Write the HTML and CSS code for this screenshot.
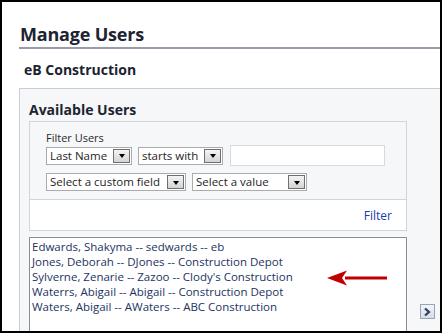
FILE: index.html
```html
<!DOCTYPE html>
<html>
<head>
<meta charset="utf-8">
<link rel="stylesheet" href="styles.css">
</head>
<body>
<div class="frame">
  <h1 class="title">Manage Users</h1>
  <h2 class="company">eB Construction</h2>
  <div class="panel">
    <h3 class="panel-title">Available Users</h3>
    <div class="filterbox">
      <div class="filter-top">
        <div class="filter-label">Filter Users</div>
        <div class="filter-row">
          <div class="select sel-last"><span class="sel-text">Last Name</span><span class="sel-btn"><span class="tri"></span></span></div>
          <div class="select sel-op"><span class="sel-text">starts with</span><span class="sel-btn"><span class="tri"></span></span></div>
          <div class="text-input"></div>
        </div>
        <div class="filter-row row2">
          <div class="select sel-field"><span class="sel-text">Select a custom field</span><span class="sel-btn"><span class="tri"></span></span></div>
          <div class="select sel-value"><span class="sel-text">Select a value</span><span class="sel-btn"><span class="tri"></span></span></div>
        </div>
      </div>
      <div class="filter-bottom"><a class="filter-link">Filter</a></div>
    </div>
    <div class="list-row">
      <div class="listbox">
        <div class="item">Edwards, Shakyma -- sedwards -- eb</div>
        <div class="item">Jones, Deborah -- DJones -- Construction Depot</div>
        <div class="item">Sylverne, Zenarie -- Zazoo -- Clody's Construction</div>
        <div class="item">Waterrs, Abigail -- Abigail -- Construction Depot</div>
        <div class="item">Waters, Abigail -- AWaters -- ABC Construction</div>
      </div>
      <div class="move-btn">
        <svg width="9" height="10" viewBox="0 0 9 10"><path d="M2 1.5 L6 5 L2 8.5" fill="none" stroke="#2f3f5c" stroke-width="2.2"/></svg>
      </div>
    </div>
    <svg class="arrow" width="62" height="18" viewBox="0 0 62 18"><path d="M18 7.5 H60 V10.5 H18 Z" fill="#c00000"/><path d="M0 9 L20 1.5 L15 9 L20 16.5 Z" fill="#c00000"/></svg>
  </div>
</div>
</body>
</html>
```

FILE: styles.css
```css
html, body {
  margin: 0;
  padding: 0;
  background: #ffffff;
}
.frame {
  width: 442px;
  height: 333px;
  box-sizing: border-box;
  border: 2px solid #000;
  padding-left: 17px;
  overflow: hidden;
  font-family: "Open Sans", "Noto Sans", sans-serif;
  color: #1c2433;
}
.title {
  margin: 21px 0 0 0;
  padding: 0 0 2px 1px;
  font-size: 18px;
  line-height: 22px;
  font-weight: 700;
  color: #1d2331;
  border-bottom: 2px solid #959cab;
  letter-spacing: -0.2px;
}
.company {
  margin: 12px 0 0 0;
  padding-left: 5px;
  font-size: 14px;
  line-height: 18px;
  font-weight: 700;
  color: #1d2331;
}
.panel {
  position: relative;
  margin-top: 9px;
  border-top: 1px solid #c9ced6;
  border-left: 1px solid #c9ced6;
  background: #f5f7f9;
  padding: 12px 0 0 9px;
  height: 300px;
}
.panel-title {
  margin: 0;
  font-size: 14px;
  line-height: 18px;
  font-weight: 700;
  color: #1d2331;
}
.filterbox {
  margin-top: 2px;
  width: 378px;
  box-sizing: border-box;
  border: 1px solid #d0d5dc;
}
.filter-top {
  padding: 9px 0 8px 16px;
  border-bottom: 1px solid #d0d5dc;
  background: #f5f7f9;
}
.filter-label {
  font-size: 11px;
  line-height: 14px;
  color: #2a2a2a;
}
.filter-row {
  display: flex;
  align-items: center;
  gap: 6px;
  height: 21px;
}
.row2 {
  margin-top: 7px;
  height: 18px;
}
.select {
  display: flex;
  align-items: center;
  justify-content: space-between;
  box-sizing: border-box;
  height: 18px;
  border: 1px solid #a9abb0;
  background: #fff;
  padding: 0 1px 0 3px;
  font-size: 11.5px;
  color: #1e1e1e;
}
.sel-text {
  white-space: nowrap;
  line-height: 16px;
}
.sel-last { width: 86px; }
.sel-op { width: 85px; }
.sel-field { width: 140px; }
.sel-value { width: 115px; }
.sel-btn {
  display: flex;
  align-items: center;
  justify-content: center;
  box-sizing: border-box;
  width: 17px;
  height: 14px;
  border: 1px solid #6f6f6f;
  background: linear-gradient(#f4f4f4, #d4d4d4);
}
.tri {
  width: 0;
  height: 0;
  border-left: 3.5px solid transparent;
  border-right: 3.5px solid transparent;
  border-top: 4px solid #000;
  margin-top: 1px;
}
.text-input {
  width: 155px;
  height: 21px;
  box-sizing: border-box;
  border: 1px solid #d7dbe0;
  background: #fff;
  margin-left: 1px;
}
.filter-bottom {
  height: 30px;
  background: #fff;
  display: flex;
  align-items: center;
  justify-content: flex-end;
  padding-right: 14px;
}
.filter-link {
  font-size: 12px;
  color: #1a3caa;
}
.list-row {
  display: flex;
  margin-top: 6px;
}
.listbox {
  width: 378px;
  height: 120px;
  box-sizing: border-box;
  border: 1px solid #8a8d93;
  background: #fff;
  padding: 1px 0 0 2px;
}
.item {
  font-size: 11.5px;
  line-height: 15px;
  color: #1d3363;
  white-space: nowrap;
}
.move-btn {
  margin: 67px 0 0 13px;
  width: 15px;
  height: 15px;
  box-sizing: border-box;
  border: 1px solid #9aa3b3;
  background: linear-gradient(#f3f5f9, #d6dce6);
  display: flex;
  align-items: center;
  justify-content: center;
}
.arrow {
  position: absolute;
  left: 307px;
  top: 180px;
}
```
